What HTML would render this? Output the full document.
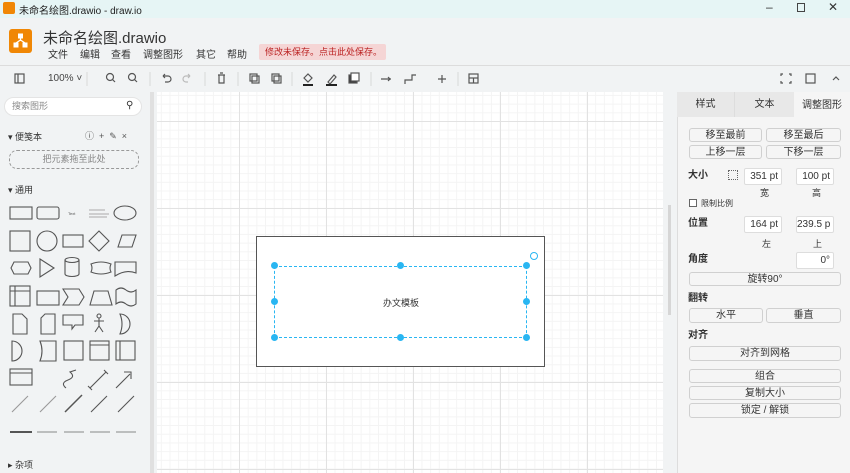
<!DOCTYPE html>
<html><head><meta charset="utf-8"><style>
*{box-sizing:border-box;margin:0;padding:0}
body{width:850px;height:473px;overflow:hidden;background:#f1f3f4;font-family:"Liberation Sans","Noto Sans CJK SC",sans-serif;font-size:11px;color:#333;position:relative}
.abs{position:absolute}
.btn{position:absolute;background:#f5f5f5;border:1px solid #d0d0d0;border-radius:3px;text-align:center;font-size:10px;line-height:13px;color:#333}
.inp{position:absolute;background:#fff;border:1px solid #ddd;border-radius:2px;text-align:right;font-size:10px;padding-right:3px;line-height:15px;white-space:nowrap;overflow:hidden}
.lbl{position:absolute;font-size:10px;font-weight:bold;color:#333;line-height:12px}
.h{position:absolute;width:7px;height:7px;border-radius:50%;background:#29b6f2}
</style></head><body>
<div class="abs" style="left:0;top:0;width:850px;height:18px;background:#e6f5f5"></div>
<div class="abs" style="left:3px;top:2px;width:12px;height:12px;background:#f08705;border-radius:2px"></div>
<div class="abs" style="left:19px;top:2px;font-size:10px;color:#222">未命名绘图.drawio - draw.io</div>
<div class="abs" style="left:766px;top:0;font-size:12px;color:#333">–</div>
<div class="abs" style="left:797px;top:3px;width:8px;height:9px;border:1px solid #444"></div>
<div class="abs" style="left:828px;top:0;font-size:12px;color:#333">✕</div>
<div class="abs" style="left:9px;top:29px;width:23px;height:24px;background:#f08705;border-radius:3px"></div>
<svg class="abs" style="left:13px;top:33px" width="15" height="15" viewBox="0 0 15 15" fill="#fff" stroke="#fff"><rect x="5.5" y="1" width="4" height="4"/><rect x="1" y="10" width="4" height="4"/><rect x="10" y="10" width="4" height="4"/><path d="M7.5 5V8M3 10L7.5 7L12 10" fill="none" stroke-width="1.3"/></svg>
<div class="abs" style="left:43px;top:27px;font-size:15px;color:#333">未命名绘图.drawio</div>
<div class="abs" style="left:48px;top:46px;font-size:10px;color:#333">文件</div>
<div class="abs" style="left:80px;top:46px;font-size:10px;color:#333">编辑</div>
<div class="abs" style="left:111px;top:46px;font-size:10px;color:#333">查看</div>
<div class="abs" style="left:143px;top:46px;font-size:10px;color:#333">调整图形</div>
<div class="abs" style="left:196px;top:46px;font-size:10px;color:#333">其它</div>
<div class="abs" style="left:227px;top:46px;font-size:10px;color:#333">帮助</div>
<div class="abs" style="left:259px;top:44px;width:127px;height:16px;background:#f5d5d5;border-radius:2px;color:#b22;font-size:9px;line-height:16px;padding-left:6px">修改未保存。点击此处保存。</div>
<div class="abs" style="left:0;top:65px;width:850px;height:1px;background:#dcdcdc"></div>
<svg class="abs" style="left:0;top:68px" width="850" height="22" fill="none" stroke="#555" stroke-width="1.2">
<rect x="15" y="6" width="9" height="9"/><line x1="18" y1="6" x2="18" y2="15"/>
<circle cx="110" cy="9" r="3.5"/><line x1="112.5" y1="11.5" x2="115" y2="14"/>
<circle cx="132" cy="9" r="3.5"/><line x1="134.5" y1="11.5" x2="137" y2="14"/>
<path d="M163 8h5a3 3 0 010 6h-3M163 8l2-2M163 8l2 2"/>
<path d="M190 8h-4a3 3 0 000 6h2M190 8l-2-2M190 8l-2 2" stroke="#bbb"/>
<path d="M218 7h7M219 7v8h5v-8M220 5h3"/>
<rect x="250" y="6" width="7" height="7"/><rect x="252" y="8" width="7" height="7"/>
<rect x="272" y="6" width="7" height="7"/><rect x="274" y="8" width="7" height="7"/>
<path d="M304 10l4-4 4 4-4 4z"/><line x1="303" y1="17" x2="313" y2="17" stroke="#222" stroke-width="2"/>
<path d="M328 14l6-7 2 2-6 7z"/><line x1="326" y1="17" x2="337" y2="17" stroke="#222" stroke-width="2"/>
<rect x="349" y="7" width="8" height="8" fill="#333"/><rect x="351" y="5" width="8" height="8" fill="#fff"/>
<path d="M381 11h10M388 9l2 2-2 2" /><path d="M405 16v-4h7v-5h4"/>
<path d="M438 11h8M442 7v8"/>
<rect x="469" y="6" width="9" height="9"/><line x1="469" y1="10" x2="478" y2="10"/><line x1="473.5" y1="10" x2="473.5" y2="15"/>
<path d="M783 6h-2v2M789 6h2v2M783 15h-2v-2M789 15h2v-2"/>
<rect x="806" y="6" width="9" height="9"/>
<path d="M833 12l3-3 3 3"/>
<line x1="87" y1="4" x2="87" y2="18" stroke="#ddd"/><line x1="150" y1="4" x2="150" y2="18" stroke="#ddd"/><line x1="205" y1="4" x2="205" y2="18" stroke="#ddd"/><line x1="238" y1="4" x2="238" y2="18" stroke="#ddd"/><line x1="292" y1="4" x2="292" y2="18" stroke="#ddd"/><line x1="371" y1="4" x2="371" y2="18" stroke="#ddd"/><line x1="458" y1="4" x2="458" y2="18" stroke="#ddd"/>
</svg>
<div class="abs" style="left:48px;top:73px;font-size:10px;color:#444">100% ˅</div>
<div class="abs" style="left:4px;top:97px;width:138px;height:19px;background:#fff;border-radius:10px;border:1px solid #e4e4e4;font-size:9px;color:#888;line-height:17px;padding-left:7px">搜索图形</div>
<div class="abs" style="left:126px;top:100px;font-size:10px">⚲</div>
<div class="abs" style="left:8px;top:130px;font-size:9px;color:#333">▾ 便笺本</div>
<div class="abs" style="left:85px;top:129px;font-size:9px;color:#555;letter-spacing:5px">ⓘ+✎×</div>
<div class="abs" style="left:9px;top:150px;width:130px;height:19px;border:1px dashed #999;border-radius:8px;font-size:9px;color:#888;text-align:center;line-height:17px">把元素拖至此处</div>
<div class="abs" style="left:8px;top:183px;font-size:9px">▾ 通用</div>
<svg class="abs" style="left:0;top:198px" width="150" height="245" fill="none" stroke="#555" stroke-width="1.1">
<rect x="10" y="9" width="22" height="12"/><rect x="37" y="9" width="22" height="12" rx="2"/><text x="68" y="17" font-size="4" fill="#555" stroke="none">Text</text><path d="M89 12h16M89 16h20M89 19h18" stroke="#aaa"/><ellipse cx="125" cy="15" rx="11" ry="7"/>
<rect x="10" y="33" width="20" height="20"/><circle cx="47" cy="43" r="10"/><rect x="63" y="37" width="20" height="12"/><path d="M99 33l10 10-10 10-10-10z"/><path d="M118 49l4-12h14l-4 12z"/>
<path d="M11 70l3-6h14l3 6-3 6h-14z"/><path d="M40 61l14 9-14 9z"/><path d="M65 62a7 2.5 0 0114 0v14a7 2.5 0 01-14 0zM65 62a7 2.5 0 0014 0"/><path d="M91 66q10-4 20 0q-2 4 0 8q-10 4-20 0q2-4 0-8z"/><path d="M115 64h21v11q-10-4-21 3z"/>
<rect x="10" y="88" width="20" height="20"/><path d="M10 93h20M15 88v20"/><rect x="37" y="93" width="22" height="14"/><path d="M63 91h16l5 8-5 8h-16l5-8z"/><path d="M90 107l4-14h14l4 14z"/><path d="M116 92q5-4 10 0q5 4 10 0v14q-5 4-10 0q-5-4-10 0z"/>
<path d="M13 116h9l5 5v15h-14z"/><path d="M41 120l4-4h10v20h-14z"/><path d="M63 117h20v10h-8l-3 4v-4h-9z"/><circle cx="99" cy="118" r="2"/><path d="M99 120v8M94 123h10M99 128l-4 6M99 128l4 6"/><path d="M120 116a10 10 0 010 20q4-10 0-20z"/>
<path d="M12 143a10 10 0 010 20z"/><path d="M40 143h16v20h-16q4-10 0-20z"/><rect x="64" y="143" width="19" height="19"/><rect x="90" y="143" width="19" height="19"/><path d="M90 147h19"/><rect x="116" y="143" width="19" height="19"/><path d="M120 143v19"/>
<rect x="10" y="171" width="22" height="16"/><path d="M10 175h22"/><path d="M66 190q-6-5 2-8q8-3 2-8l6-2"/><path d="M90 190l16-16M88 188l4 4M104 172l4 4"/><path d="M116 190l14-14M124 174h7v7"/>
<path d="M12 214l16-16M40 214l16-16" stroke="#999"/><path d="M65 214l17-17" stroke-width="1.5"/><path d="M91 214l16-16"/><path d="M118 214l16-16"/>
<path d="M10 234h22" stroke-width="2"/><path d="M37 234h20M64 234h20M90 234h20M116 234h20" stroke="#888"/>
</svg>
<div class="abs" style="left:8px;top:458px;font-size:9px">▸ 杂项</div>
<div class="abs" style="left:150px;top:92px;width:4px;height:381px;background:#e0e0e0"></div>
<div class="abs" style="left:157px;top:92px;width:506px;height:381px;background-color:#fff;
background-image:linear-gradient(#e2e2e2 1px,transparent 1px),linear-gradient(90deg,#e2e2e2 1px,transparent 1px),linear-gradient(#f4f4f4 1px,transparent 1px),linear-gradient(90deg,#f4f4f4 1px,transparent 1px);
background-size:87px 87px,87px 87px,8.7px 8.7px,8.7px 8.7px;background-position:0 29px,82px 0,0 29px,82px 0"></div>
<div class="abs" style="left:663px;top:92px;width:14px;height:381px;background:#f1f3f4"></div>
<div class="abs" style="left:668px;top:205px;width:3px;height:110px;background:#d6d6d6"></div>
<div class="abs" style="left:256px;top:236px;width:289px;height:131px;background:#fff;border:1.3px solid #555"></div>
<div class="abs" style="left:274px;top:266px;width:253px;height:72px;border:1px dashed #29b6f2"></div>
<div class="h" style="left:271px;top:262px"></div><div class="h" style="left:397px;top:262px"></div><div class="h" style="left:523px;top:262px"></div>
<div class="h" style="left:271px;top:298px"></div><div class="h" style="left:523px;top:298px"></div>
<div class="h" style="left:271px;top:334px"></div><div class="h" style="left:397px;top:334px"></div><div class="h" style="left:523px;top:334px"></div>
<div class="abs" style="left:530px;top:252px;width:8px;height:8px;border:1.5px solid #29b6f2;border-radius:50%"></div>
<div class="abs" style="left:383px;top:296px;font-size:9px;color:#333">办文模板</div>
<div class="abs" style="left:677px;top:92px;width:173px;height:381px;background:#f5f5f5;border-left:1px solid #ddd"></div>
<div class="abs" style="left:677px;top:92px;width:58px;height:25px;background:#e8e8e8;border-right:1px solid #ddd;text-align:center;line-height:25px;font-size:10px">样式</div>
<div class="abs" style="left:735px;top:92px;width:59px;height:25px;background:#e8e8e8;text-align:center;line-height:25px;font-size:10px">文本</div>
<div class="abs" style="left:794px;top:92px;width:56px;height:25px;text-align:center;line-height:27px;font-size:10px">调整图形</div>
<div class="btn" style="left:689px;top:128px;width:73px;height:14px">移至最前</div>
<div class="btn" style="left:766px;top:128px;width:75px;height:14px">移至最后</div>
<div class="btn" style="left:689px;top:145px;width:73px;height:14px">上移一层</div>
<div class="btn" style="left:766px;top:145px;width:75px;height:14px">下移一层</div>
<div class="lbl" style="left:688px;top:170px">大小</div>
<div class="abs" style="left:728px;top:170px;width:10px;height:10px;border:1px dotted #666"></div>
<div class="inp" style="left:744px;top:168px;width:38px;height:17px">351 pt</div>
<div class="inp" style="left:796px;top:168px;width:38px;height:17px">100 pt</div>
<div class="abs" style="left:760px;top:186px;font-size:9px">宽</div><div class="abs" style="left:812px;top:186px;font-size:9px">高</div>
<div class="abs" style="left:689px;top:199px;width:8px;height:8px;border:1px solid #666;background:#fff"></div>
<div class="abs" style="left:701px;top:198px;font-size:8px">限制比例</div>
<div class="lbl" style="left:688px;top:218px">位置</div>
<div class="inp" style="left:744px;top:216px;width:38px;height:17px">164 pt</div>
<div class="inp" style="left:796px;top:216px;width:38px;height:17px">239.5 p</div>
<div class="abs" style="left:762px;top:237px;font-size:9px">左</div><div class="abs" style="left:813px;top:237px;font-size:9px">上</div>
<div class="lbl" style="left:688px;top:254px">角度</div>
<div class="inp" style="left:796px;top:252px;width:38px;height:17px">0°</div>
<div class="btn" style="left:689px;top:272px;width:152px;height:14px">旋转90°</div>
<div class="lbl" style="left:688px;top:293px">翻转</div>
<div class="btn" style="left:689px;top:308px;width:74px;height:15px">水平</div>
<div class="btn" style="left:766px;top:308px;width:75px;height:15px">垂直</div>
<div class="lbl" style="left:688px;top:330px">对齐</div>
<div class="btn" style="left:689px;top:346px;width:152px;height:15px">对齐到网格</div>
<div class="btn" style="left:689px;top:369px;width:152px;height:14px">组合</div>
<div class="btn" style="left:689px;top:386px;width:152px;height:14px">复制大小</div>
<div class="btn" style="left:689px;top:403px;width:152px;height:15px">锁定 / 解锁</div>
</body></html>
